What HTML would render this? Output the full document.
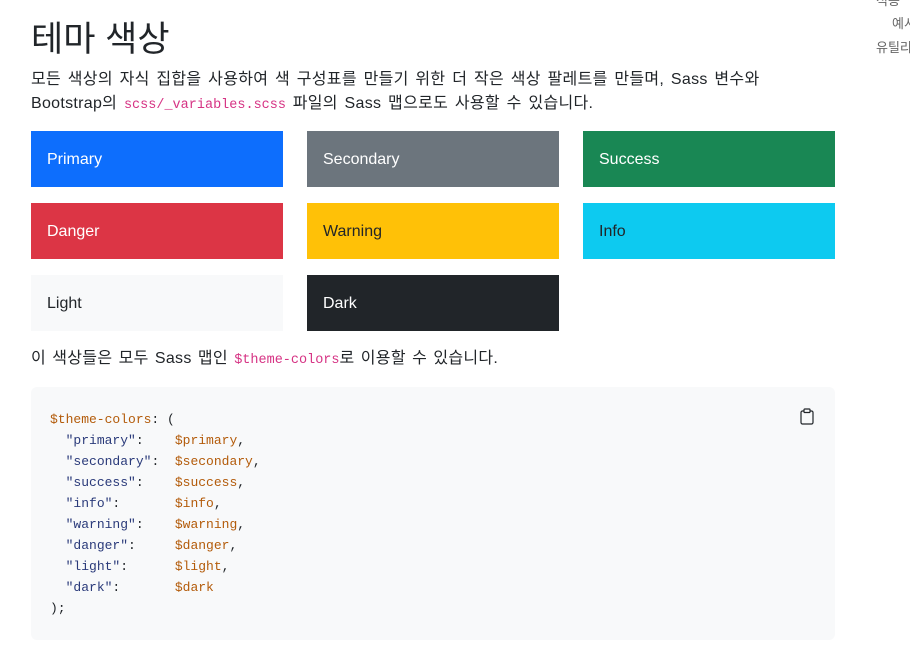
<!DOCTYPE html>
<html><head><meta charset="utf-8"><style>
body{margin:0;width:910px;height:648px;overflow:hidden;background:#fff;font-family:"Liberation Sans","Noto Sans CJK KR",sans-serif;color:#212529;position:relative}
h1{position:absolute;left:31px;top:18px;margin:0;font-weight:400;font-size:35px;line-height:44px}
.p{position:absolute;left:31px;top:68px;font-size:16px;line-height:24px;width:820px;letter-spacing:0.3px;word-spacing:2px;white-space:nowrap}
code{font-family:"Liberation Mono",monospace;font-size:13.5px;color:#d63384;letter-spacing:0;word-spacing:0}
.b{position:absolute;width:252px;height:56px;font-size:16px;line-height:57px;padding-left:16px;box-sizing:border-box;color:#fff}
.p2{position:absolute;left:31px;top:347px;font-size:16px;line-height:24px;letter-spacing:0.3px;word-spacing:1.5px;white-space:nowrap}
pre{position:absolute;left:31px;top:387px;width:804px;height:253px;margin:0;box-sizing:border-box;background:#f8f9fa;border-radius:6px;padding:22px 19px;font-family:"Liberation Mono",monospace;font-size:13px;line-height:21px;color:#212529}
.v{color:#b35b0a}.s{color:#2a3a7a}
.side{position:absolute;font-size:13px;color:#666;line-height:20px;white-space:nowrap}
</style></head><body>
<div class="side" style="left:876px;top:-9px">적용</div>
<div class="side" style="left:892px;top:14px">예시</div>
<div class="side" style="left:876px;top:38px">유틸리티</div>
<h1>테마 색상</h1>
<div class="p">모든 색상의 자식 집합을 사용하여 색 구성표를 만들기 위한 더 작은 색상 팔레트를 만들며, Sass 변수와<br>Bootstrap의 <code>scss/_variables.scss</code> 파일의 Sass 맵으로도 사용할 수 있습니다.</div>
<div class="b" style="left:31px;top:131px;background:#0d6efd">Primary</div>
<div class="b" style="left:307px;top:131px;background:#6c757d">Secondary</div>
<div class="b" style="left:583px;top:131px;background:#198754">Success</div>
<div class="b" style="left:31px;top:203px;background:#dc3545">Danger</div>
<div class="b" style="left:307px;top:203px;background:#ffc107;color:#212529">Warning</div>
<div class="b" style="left:583px;top:203px;background:#0dcaf0;color:#212529">Info</div>
<div class="b" style="left:31px;top:275px;background:#f8f9fa;color:#212529">Light</div>
<div class="b" style="left:307px;top:275px;background:#212529">Dark</div>
<div class="p2">이 색상들은 모두 Sass 맵인 <code>$theme-colors</code>로 이용할 수 있습니다.</div>
<pre><span class="v">$theme-colors</span>: (
  <span class="s">"primary"</span>:    <span class="v">$primary</span>,
  <span class="s">"secondary"</span>:  <span class="v">$secondary</span>,
  <span class="s">"success"</span>:    <span class="v">$success</span>,
  <span class="s">"info"</span>:       <span class="v">$info</span>,
  <span class="s">"warning"</span>:    <span class="v">$warning</span>,
  <span class="s">"danger"</span>:     <span class="v">$danger</span>,
  <span class="s">"light"</span>:      <span class="v">$light</span>,
  <span class="s">"dark"</span>:       <span class="v">$dark</span>
);</pre>
<svg style="position:absolute;left:799px;top:408px" width="16" height="17" viewBox="0 0 16 17" fill="none" stroke="#212529" stroke-width="1.2"><rect x="2" y="3" width="12" height="13" rx="1.5"/><rect x="5" y="1" width="6" height="3.5" rx="0.8" fill="#f8f9fa"/></svg>
</body></html>
